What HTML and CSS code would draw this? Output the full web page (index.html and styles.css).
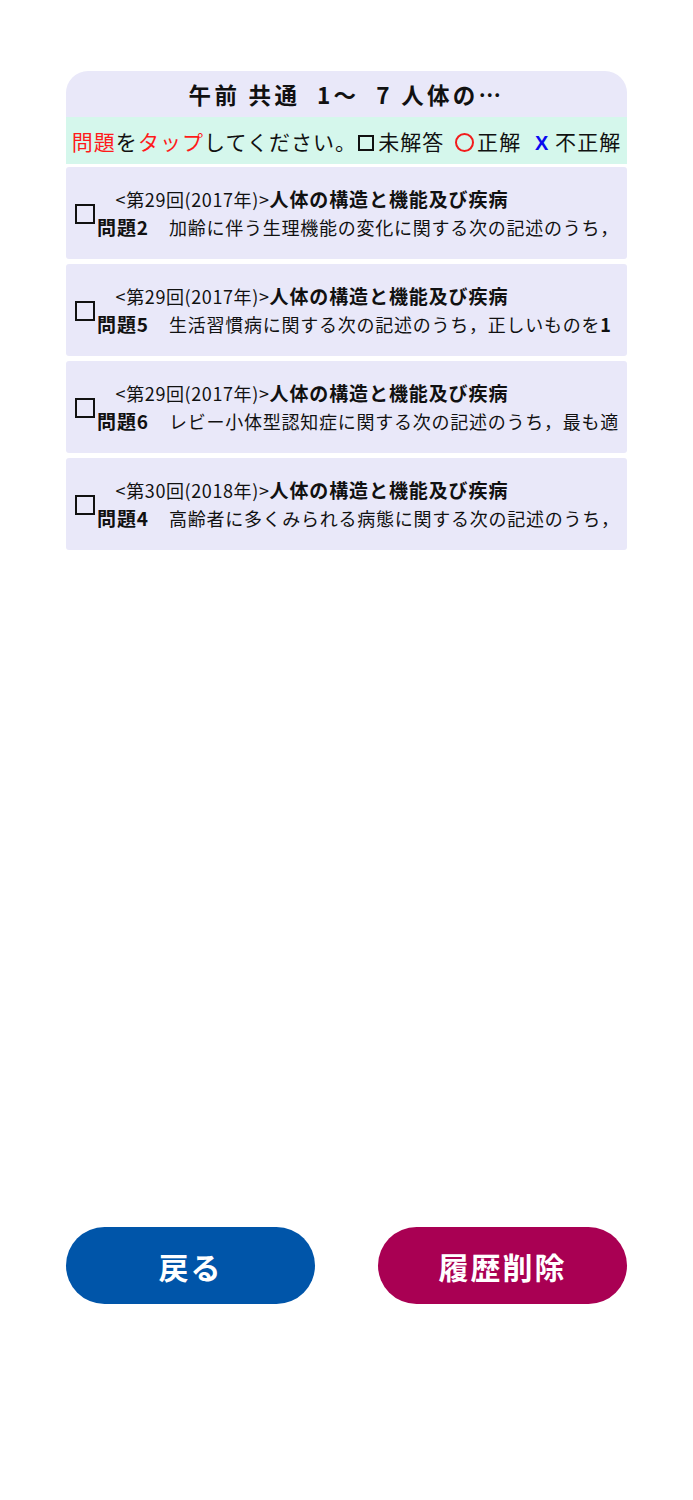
FILE: index.html
```html
<!DOCTYPE html>
<html lang="ja">
<head>
<meta charset="utf-8">
<title>履歴</title>
<link rel="stylesheet" href="styles.css">
</head>
<body>
<div class="page">
  <div class="panel">
    <div class="title"><span>午前 共通&nbsp;&nbsp;1〜&nbsp;&nbsp;7 人体の…</span></div>
    <div class="legend">
      <span class="legend-text"><span class="red">問題</span>を<span class="red">タップ</span>してください。<span class="lbox"></span>未解答 <span class="ring"></span>正解 <span class="cross">X</span> 不正解</span>
    </div>
  </div>
  <div class="list">
    <div class="card">
      <span class="cbox"></span>
      <div class="lines">
        <div class="line">　&lt;第29回(2017年)&gt;<b class="subj">人体の構造と機能及び疾病</b></div>
        <div class="line"><b class="qno">問題2</b><span class="q">加齢に伴う生理機能の変化に関する次の記述のうち，</span></div>
      </div>
    </div>
    <div class="card">
      <span class="cbox"></span>
      <div class="lines">
        <div class="line">　&lt;第29回(2017年)&gt;<b class="subj">人体の構造と機能及び疾病</b></div>
        <div class="line"><b class="qno">問題5</b><span class="q">生活習慣病に関する次の記述のうち，正しいものを</span><b class="q1">1</b></div>
      </div>
    </div>
    <div class="card">
      <span class="cbox"></span>
      <div class="lines">
        <div class="line">　&lt;第29回(2017年)&gt;<b class="subj">人体の構造と機能及び疾病</b></div>
        <div class="line"><b class="qno">問題6</b><span class="q">レビー小体型認知症に関する次の記述のうち，最も適</span></div>
      </div>
    </div>
    <div class="card">
      <span class="cbox"></span>
      <div class="lines">
        <div class="line">　&lt;第30回(2018年)&gt;<b class="subj">人体の構造と機能及び疾病</b></div>
        <div class="line"><b class="qno">問題4</b><span class="q">高齢者に多くみられる病態に関する次の記述のうち，</span></div>
      </div>
    </div>
  </div>
  <div class="buttons">
    <button class="btn back">戻る</button>
    <button class="btn del">履歴削除</button>
  </div>
</div>
</body>
</html>
```

FILE: styles.css
```css
html, body {
  margin: 0;
  padding: 0;
  background: #ffffff;
}
body {
  font-family: "Noto Sans CJK JP", "Noto Sans", sans-serif;
  color: #111;
}
.page {
  box-sizing: border-box;
  height: 1500px;
  padding: 71px 66px 196px;
  display: flex;
  flex-direction: column;
}
.panel {
  background: #e9e8f9;
  border-radius: 22px 22px 0 0;
  overflow: hidden;
}
.title {
  height: 46px;
  display: flex;
  align-items: center;
  justify-content: center;
  font-size: 22.5px;
  font-weight: 700;
  letter-spacing: 3.3px;
  white-space: nowrap;
}
.legend {
  height: 47px;
  background: #d5f7ec;
  display: flex;
  align-items: center;
  justify-content: center;
}
.legend-text {
  font-size: 21px;
  letter-spacing: 1.05px;
  white-space: nowrap;
}
.red { color: #ff1a1a; }
.lbox {
  display: inline-block;
  box-sizing: border-box;
  width: 16px;
  height: 16px;
  border: 2px solid #111;
  margin: 0 4px 0 1px;
  vertical-align: -1px;
}
.ring {
  display: inline-block;
  box-sizing: border-box;
  width: 19px;
  height: 19px;
  border: 2px solid #f21c1c;
  border-radius: 50%;
  margin: 0 3px 0 5px;
  vertical-align: -2px;
}
.cross {
  color: #0a0af0;
  font-family: "Liberation Sans", "Noto Sans", sans-serif;
  font-weight: 700;
  font-size: 20px;
  margin-left: 8px;
}
.list {
  flex: 1;
  display: flex;
  flex-direction: column;
  gap: 5px;
  margin-top: 3px;
}
.card {
  height: 92px;
  background: #e9e8f9;
  border-radius: 3px;
  display: flex;
  align-items: center;
  padding-left: 9px;
  overflow: hidden;
}
.cbox {
  flex: none;
  box-sizing: border-box;
  width: 20px;
  height: 20px;
  border: 2px solid #111;
  margin-top: 1px;
  margin-right: 2px;
}
.lines {
  display: flex;
  flex-direction: column;
  min-width: 0;
}
.line {
  font-size: 18px;
  letter-spacing: 0.6px;
  line-height: 27px;
  white-space: nowrap;
  overflow: hidden;
}
.q {
  letter-spacing: 0.75px;
}
.subj {
  font-weight: 700;
  font-size: 19px;
  letter-spacing: 0.9px;
}
.qno {
  font-weight: 700;
  font-size: 19px;
  letter-spacing: 0.9px;
  margin-right: 20px;
}
.q1 {
  font-weight: 700;
}
.buttons {
  display: flex;
  justify-content: space-between;
}
.btn {
  width: 249px;
  height: 77px;
  border: none;
  border-radius: 39px;
  color: #fff;
  font-family: "Noto Sans CJK JP", "Noto Sans", sans-serif;
  font-weight: 700;
  font-size: 30px;
  letter-spacing: 2px;
  padding: 0;
}
.back { background: #0055a9; }
.del { background: #a90053; }
```
